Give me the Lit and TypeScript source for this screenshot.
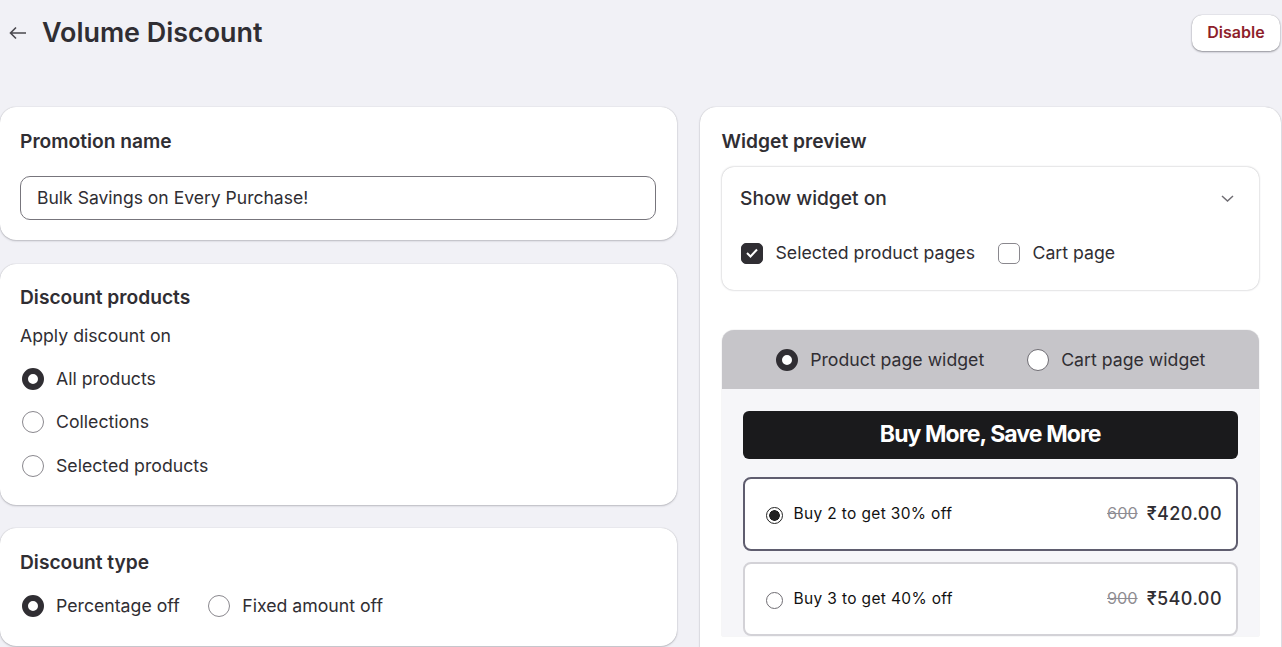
import { LitElement, html, css } from 'lit'
import { customElement } from 'lit/decorators.js'

const radio = (label: string, on = false) => html`
    <label class="radio-row">
        <span class="radio ${on ? 'on' : ''}"></span>
        <span>${label}</span>
    </label>
`

const offer = (label: string, was: string, now: string, on = false) => html`
    <div class="offer ${on ? 'on' : ''}">
        <span class="dot ${on ? 'on' : ''}"></span>
        <span class="offer-label">${label}</span>
        <s class="was">${was}</s>
        <span class="now">${now}</span>
    </div>
`

@customElement('app-root')
export class AppRoot extends LitElement {
    static styles = css`
        :host {
            display: block;
            height: 647px;
            overflow: hidden;
            background: #f1f1f6;
            color: #302e33;
            font-family: Inter, 'Liberation Sans', sans-serif;
            font-size: 17.7px;
        }

        header {
            height: 107px;
            box-sizing: border-box;
            padding: 15px 2px 0 9px;
            display: flex;
            align-items: flex-start;
        }

        .back {
            width: 18px;
            height: 14px;
            margin-top: 11px;
            margin-right: 15px;
            color: #4a484e;
        }

        h1 {
            margin: 0;
            font-size: 26.9px;
            line-height: 34px;
            font-weight: 600;
            flex: 1;
        }

        .disable {
            width: 88px;
            height: 36px;
            border: 0;
            padding: 0 0 2px;
            border-radius: 10px;
            background: #fff;
            box-shadow: 0 0 1px rgba(40, 40, 50, 0.35), 0 1px 2px rgba(40, 40, 50, 0.45);
            color: #8e1f2b;
            font: 600 16px Inter, sans-serif;
        }

        .columns {
            display: grid;
            grid-template-columns: 677px 581px;
            column-gap: 23px;
            align-items: start;
        }

        .stack {
            display: flex;
            flex-direction: column;
            gap: 24px;
        }

        .card {
            background: #fff;
            border-radius: 16px;
            box-shadow: 0 0 1px rgba(40, 40, 50, 0.3), 0 1px 2px rgba(40, 40, 50, 0.25);
            padding: 22px 21px 0 20px;
        }

        h2 {
            margin: 0;
            font-size: 19.2px;
            line-height: 24px;
            font-weight: 600;
        }

        .name {
            height: 133px;
            box-sizing: border-box;
        }

        .input {
            margin-top: 23px;
            height: 44px;
            box-sizing: border-box;
            border: 1px solid #77757c;
            border-radius: 10px;
            padding: 0 16px 1px;
            font-size: 17.55px;
            display: flex;
            align-items: center;
        }

        .products {
            height: 241px;
            box-sizing: border-box;
            padding-top: 21px;
        }

        .hint {
            margin: 15px 0 0;
            line-height: 24px;
        }

        .radios {
            margin-top: 15px;
            display: flex;
            flex-direction: column;
            gap: 11.3px;
        }

        .radio-row {
            display: flex;
            align-items: center;
            gap: 12.5px;
            height: 32px;
            line-height: 32px;
            white-space: nowrap;
        }

        .radio {
            width: 22px;
            height: 22px;
            box-sizing: border-box;
            margin-left: 1.5px;
            border: 1px solid #8a888e;
            border-radius: 50%;
            background: #fff;
            flex: none;
        }

        .radio.on {
            border: 6px solid #302e33;
        }

        .type {
            height: 118px;
            box-sizing: border-box;
            margin-top: -1px;
        }

        .type .radios {
            margin-top: 16px;
            flex-direction: row;
            gap: 26.5px;
        }

        .preview {
            height: 600px;
            box-sizing: border-box;
            padding: 22px 22px 0 21.5px;
        }

        .show {
            margin-top: 14px;
            height: 123px;
            box-sizing: border-box;
            border-radius: 12px;
            box-shadow: 0 0 2px rgba(40, 40, 50, 0.4);
            padding: 18px 19px 0 18.5px;
        }

        .show-head {
            display: flex;
            align-items: center;
            justify-content: space-between;
            font-size: 19.2px;
            font-weight: 500;
            line-height: 26px;
        }

        .chevron {
            width: 13px;
            height: 7px;
            margin-right: 6px;
            color: #6f6d73;
        }

        .checks {
            margin-top: 30px;
            padding-left: 1px;
            display: flex;
            align-items: center;
            line-height: 24px;
        }

        .check {
            width: 22px;
            height: 21px;
            box-sizing: border-box;
            border: 1px solid #8a888e;
            border-radius: 5px;
            margin-right: 12.5px;
            display: flex;
            align-items: center;
            justify-content: center;
        }

        .check.on {
            background: #302e33;
            border-color: #302e33;
            color: #fff;
        }

        .check svg {
            width: 12px;
            height: 10px;
        }

        .check.off {
            margin-left: 23px;
        }

        .widget {
            margin-top: 40px;
            border-radius: 12px 12px 0 0;
            background: #f6f6f9;
            box-shadow: 0 0 1px rgba(40, 40, 50, 0.4);
            overflow: hidden;
        }

        .tabs {
            height: 59px;
            background: #c6c5c9;
            display: flex;
            align-items: center;
            justify-content: center;
            gap: 42px;
        }

        .tabs .radio-row {
            gap: 12px;
        }

        .tabs .radio {
            margin-left: 1px;
        }

        .tabs .radio:not(.on) {
            border-color: #6f6d73;
        }

        .widget-body {
            padding: 22px 21.5px 0;
            display: flex;
            flex-direction: column;
            gap: 11px;
        }

        .banner {
            height: 48px;
            box-sizing: border-box;
            padding-bottom: 2px;
            margin-bottom: 7px;
            border-radius: 6px;
            background: #1a1a1c;
            color: #fff;
            font-size: 23px;
            font-weight: 700;
            letter-spacing: -0.9px;
            display: flex;
            align-items: center;
            justify-content: center;
        }

        .offer {
            height: 74px;
            box-sizing: border-box;
            border: 2px solid #d3d2d7;
            border-radius: 8px;
            background: #fff;
            padding: 0 13.5px 2px 21px;
            display: flex;
            align-items: center;
        }

        .offer.on {
            border-color: #5f5d6f;
        }

        .dot {
            width: 17px;
            height: 17px;
            box-sizing: border-box;
            margin-top: 4px;
            border: 1px solid #6f6d73;
            border-radius: 50%;
            margin-right: 10.5px;
            flex: none;
        }

        .dot.on {
            border: 1.5px solid #222;
            background: radial-gradient(circle, #222 0 5px, #fff 5.6px);
        }

        .offer-label {
            flex: 1;
            color: #111;
            font-size: 15.5px;
            letter-spacing: 0.35px;
        }

        .was {
            color: #8f8d93;
            font-size: 16.3px;
            margin-right: 9px;
        }

        .now {
            font-size: 18px;
            font-weight: 500;
            letter-spacing: 0.45px;
        }
    `

    render() {
        return html`
            <header>
                <svg class="back" viewBox="0 0 18 14" fill="none" stroke="currentColor" stroke-width="1.6">
                    <path d="M17 7H1.5M7 1.5L1.5 7L7 12.5" />
                </svg>
                <h1>Volume Discount</h1>
                <button class="disable">Disable</button>
            </header>
            <div class="columns">
                <div class="stack">
                    <section class="card name">
                        <h2>Promotion name</h2>
                        <div class="input">Bulk Savings on Every Purchase!</div>
                    </section>
                    <section class="card products">
                        <h2>Discount products</h2>
                        <p class="hint">Apply discount on</p>
                        <div class="radios">
                            ${radio('All products', true)} ${radio('Collections')}
                            ${radio('Selected products')}
                        </div>
                    </section>
                    <section class="card type">
                        <h2>Discount type</h2>
                        <div class="radios">
                            ${radio('Percentage off', true)} ${radio('Fixed amount off')}
                        </div>
                    </section>
                </div>
                <section class="card preview">
                    <h2>Widget preview</h2>
                    <div class="show">
                        <div class="show-head">
                            <span>Show widget on</span>
                            <svg class="chevron" viewBox="0 0 13 7" fill="none" stroke="currentColor" stroke-width="1.5">
                                <path d="M1 1l5.5 5L12 1" />
                            </svg>
                        </div>
                        <div class="checks">
                            <span class="check on">
                                <svg viewBox="0 0 12 10" fill="none" stroke="currentColor" stroke-width="2">
                                    <path d="M1 5l3.5 3.5L11 1.5" />
                                </svg>
                            </span>
                            <span>Selected product pages</span>
                            <span class="check off"></span>
                            <span>Cart page</span>
                        </div>
                    </div>
                    <div class="widget">
                        <div class="tabs">
                            ${radio('Product page widget', true)} ${radio('Cart page widget')}
                        </div>
                        <div class="widget-body">
                            <div class="banner">Buy More, Save More</div>
                            ${offer('Buy 2 to get 30% off', '600', '₹420.00', true)}
                            ${offer('Buy 3 to get 40% off', '900', '₹540.00')}
                        </div>
                    </div>
                </section>
            </div>
        `
    }
}
